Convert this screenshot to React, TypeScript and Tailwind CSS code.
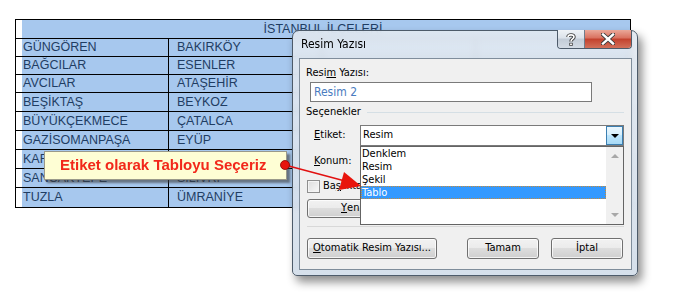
import React from "react";

const rows: string[][] = [
  ["GÜNGÖREN", "BAKIRKÖY"],
  ["BAĞCILAR", "ESENLER"],
  ["AVCILAR", "ATAŞEHİR"],
  ["BEŞİKTAŞ", "BEYKOZ"],
  ["BÜYÜKÇEKMECE", "ÇATALCA"],
  ["GAZİSOMANPAŞA", "EYÜP"],
  ["KARTAL", ""],
  ["SANCAKTEPE", "SİLİVRİ"],
  ["TUZLA", "ÜMRANİYE"],
];

function WinButton({
  children,
  className,
}: {
  children: React.ReactNode;
  className: string;
}) {
  return (
    <div
      className={
        "flex items-center rounded-[3px] border border-[#707070] bg-[linear-gradient(to_bottom,#f2f2f2_0%,#ebebeb_48%,#dddddd_50%,#cfcfcf_100%)] shadow-[inset_0_0_0_1px_rgba(255,255,255,0.75)] text-black " +
        className
      }
    >
      {children}
    </div>
  );
}

function Combo({ value, open }: { value: string; open: boolean }) {
  return (
    <div className="flex h-[21px] flex-1 items-stretch border border-[#7a7a7a] bg-white">
      <div className="flex flex-1 items-center pl-[2px]">{value}</div>
      <div
        className={
          open
            ? "flex w-[17px] items-center justify-center border border-[#3c7fb1] bg-[linear-gradient(to_bottom,#eaf6fd_0%,#d9f0fc_45%,#bee6fd_50%,#a7d9f5_100%)]"
            : "flex w-[17px] items-center justify-center border border-[#9a9a9a] bg-[linear-gradient(to_bottom,#f2f2f2_0%,#ebebeb_48%,#dddddd_50%,#cfcfcf_100%)]"
        }
      >
        <div className="h-0 w-0 border-x-[4px] border-t-[4px] border-x-transparent border-t-black" />
      </div>
    </div>
  );
}

export default function App() {
  const cellFont = "font-['Liberation_Sans',Arial,sans-serif] text-[12.5px] text-[#1f3d63]";
  return (
    <div className="relative h-[300px] w-[686px] overflow-hidden bg-white">
      {/* Excel table */}
      <div className="pl-[15px] pt-[19px]">
        <div className={"w-[616px] border border-black " + cellFont}>
          <div className="flex h-[19px] border-b border-black">
            <div className="w-[6px] bg-white" />
            <div className="flex flex-1 items-center justify-center bg-[#a7c8ee] pr-[6px]">
              İSTANBUL İLÇELERİ
            </div>
          </div>
          {rows.map((r, i) => (
            <div
              key={i}
              className={
                (i < 3 ? "h-[18px] " : "h-[19px] ") +
                (i < rows.length - 1 ? "flex border-b border-black" : "flex")
              }
            >
              <div className="flex w-[153px] border-r border-black">
                <div className="w-[6px] bg-white" />
                <div className="flex flex-1 items-center bg-[#a7c8ee] pl-[1px]">{r[0]}</div>
              </div>
              <div className="flex w-[153px] items-center border-r border-black bg-[#a7c8ee] pl-[8px]">
                {r[1]}
              </div>
              <div className="w-[154px] border-r border-black bg-[#a7c8ee]" />
              <div className="flex-1 bg-[#a7c8ee]" />
            </div>
          ))}
        </div>
      </div>

      {/* Watermark */}
      <div className="absolute left-[236px] top-[203px] font-['Liberation_Sans',Arial,sans-serif] text-[22px] font-bold text-white/70">
        www.dijitalders.com
      </div>

      {/* Dialog window */}
      <div className="absolute left-[292px] top-[30px] flex h-[246px] w-[346px] flex-col rounded-t-[7px] rounded-b-[5px] border border-[#4d5b6a] bg-[linear-gradient(to_bottom,rgba(226,233,241,0.9),rgba(210,221,233,0.92))] shadow-[4px_6px_10px_rgba(0,0,0,0.45)] backdrop-blur-[3px] font-['Tahoma','DejaVu_Sans_Condensed','Liberation_Sans',sans-serif] text-[11px] text-black">
        {/* title bar */}
        <div className="flex h-[27px] items-start">
          <div className="self-center pl-[8px] pb-[1px] text-[12px]">Resim Yazısı</div>
          <div className="ml-auto mr-[5px] -mt-[1px] flex h-[19px] overflow-hidden rounded-b-[4px] border border-t-0 border-[#4d5b6a]">
            <div className="flex w-[27px] items-center justify-center border-r border-[#6f7d8c] bg-[linear-gradient(to_bottom,#eef2f6_0%,#dbe2ea_45%,#c2ccd7_50%,#d3dbe4_100%)]">
              <svg width="10" height="13" viewBox="0 0 10 13">
                <path d="M2 4 C2 1.2 8 1.2 8 4 C8 6 5 6 5 8.5" fill="none" stroke="#3a3a3a" strokeWidth="3.4" />
                <path d="M2 4 C2 1.2 8 1.2 8 4 C8 6 5 6 5 8.5" fill="none" stroke="#ffffff" strokeWidth="1.6" />
                <rect x="3.3" y="9.8" width="3.4" height="3" fill="#3a3a3a" />
                <rect x="4.1" y="10.5" width="1.8" height="1.6" fill="#ffffff" />
              </svg>
            </div>
            <div className="flex w-[46px] items-center justify-center bg-[linear-gradient(to_bottom,#eaa899_0%,#d9705e_45%,#c3412d_50%,#d2705a_100%)]">
              <svg width="14" height="12" viewBox="0 0 14 12">
                <path d="M2 1.5 L12 10.5 M12 1.5 L2 10.5" stroke="#3a3a3a" strokeWidth="4.2" strokeLinecap="square" />
                <path d="M2 1.5 L12 10.5 M12 1.5 L2 10.5" stroke="#ffffff" strokeWidth="2.4" strokeLinecap="square" />
              </svg>
            </div>
          </div>
        </div>

        {/* client area */}
        <div className="relative mb-[5px] ml-[6px] mr-[5px] flex flex-1 flex-col border border-[#7f8d9b] bg-[#f0f0f0] pl-[6px] pr-[7px] pt-[7px]">
          <div className="flex h-[14px] items-center">
            Resi<span className="underline">m</span>&nbsp;Yazısı:
          </div>
          <div className="ml-[4px] mt-[2px] flex h-[20px] w-[282px] items-center border border-[#7a7a7a] bg-white pl-[3px] text-[12px] text-[#4a7cc0]">
            Resim 2
          </div>
          <div className="mt-[3px] flex h-[14px] items-center">
            <span>Seçenekler</span>
            <div className="ml-[6px] flex-1 border-t border-[#d5dfe5]" />
          </div>
          <div className="mt-[6px] flex h-[21px] items-center">
            <div className="ml-[8px] w-[46px]">
              <span className="underline">E</span>tiket:
            </div>
            <Combo value="Resim" open={true} />
          </div>
          <div className="mt-[5px] flex h-[21px] items-center">
            <div className="ml-[8px] w-[46px]">
              <span className="underline">K</span>onum:
            </div>
            <Combo value="" open={false} />
          </div>
          <div className="mt-[8px] flex h-[13px] items-center">
            <div className="ml-[1px] h-[13px] w-[13px] border border-[#8f8f8f] bg-[linear-gradient(135deg,#dcdcdc,#f8f8f8)] shadow-[inset_0_0_0_1px_#f4f4f4]" />
            <div className="ml-[3px] w-[37px] overflow-hidden whitespace-nowrap">
              Ba<span className="underline">ş</span>lıktan
            </div>
          </div>
          <div className="mt-[6px] flex">
            <WinButton className="ml-[1px] h-[19px] w-[104px] pl-[33px]">
              <span className="underline">Y</span>eni
            </WinButton>
          </div>
          <div className="ml-[1px] mt-[8px] border-t border-[#d8d8d8]" />
          <div className="mt-[11px] flex">
            <WinButton className="ml-[1px] h-[21px] w-[130px] justify-center">
              <span>
                <span className="underline">O</span>tomatik Resim Yazısı...
              </span>
            </WinButton>
            <WinButton className="ml-[30px] h-[21px] w-[72px] justify-center">Tamam</WinButton>
            <WinButton className="ml-[12px] h-[21px] w-[72px] justify-center">İptal</WinButton>
          </div>

          {/* open dropdown list */}
          <div className="absolute left-[60px] top-[87px] flex h-[79px] w-[264px] border border-[#646464] bg-white text-[11px]">
            <div className="flex flex-1 flex-col">
              <div className="flex h-[13px] items-center pl-[1px] leading-none">Denklem</div>
              <div className="flex h-[13px] items-center pl-[1px] leading-none">Resim</div>
              <div className="flex h-[13px] items-center pl-[1px] leading-none">Şekil</div>
              <div className="flex h-[13px] items-center border border-dotted border-[#c48a3c] bg-[#3399ff] pl-0 leading-none text-white">
                Tablo
              </div>
            </div>
            <div className="flex w-[17px] flex-col items-center justify-between bg-[#f0f0f0] py-[7px]">
              <div className="h-0 w-0 border-x-[4px] border-b-[4px] border-x-transparent border-b-[#a8a8a8]" />
              <div className="h-0 w-0 border-x-[4px] border-t-[4px] border-x-transparent border-t-[#a8a8a8]" />
            </div>
          </div>
        </div>
      </div>

      {/* Callout */}
      <div className="absolute left-[44px] top-[151px] flex h-[29px] w-[243px] items-center border border-[#9a9a8a] bg-[#fefed4] pl-[15px] shadow-[3px_3px_2px_rgba(60,60,60,0.6)] font-['Liberation_Sans',Arial,sans-serif] text-[15px] font-bold text-[#f2281a]">
        Etiket olarak Tabloyu Seçeriz
      </div>

      {/* Arrow */}
      <svg className="pointer-events-none absolute left-0 top-0" width="686" height="300" viewBox="0 0 686 300">
        <line x1="285" y1="165" x2="345" y2="181" stroke="#e21010" strokeWidth="1.3" />
        <polygon points="361,186 339,190 344,172" fill="#e8140c" />
        <circle cx="285" cy="165" r="4.5" fill="#e8140c" stroke="#8a0000" strokeWidth="0.8" />
      </svg>
    </div>
  );
}
